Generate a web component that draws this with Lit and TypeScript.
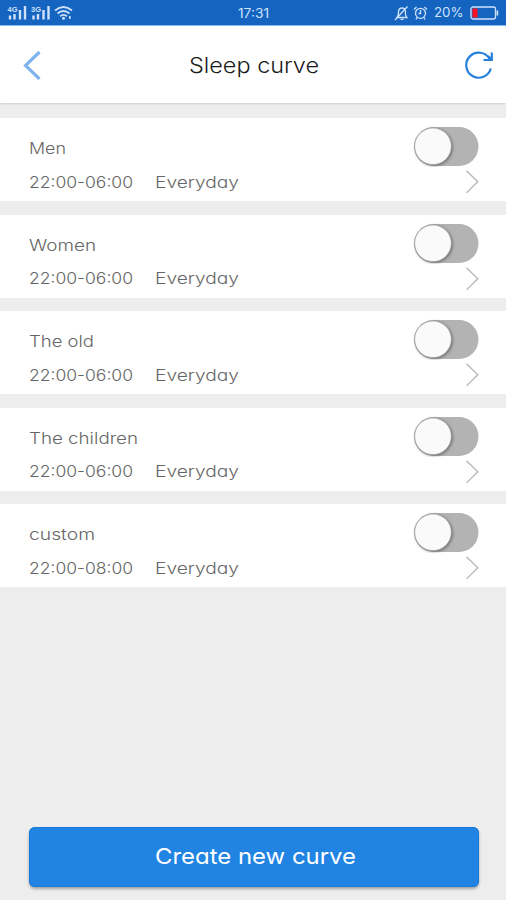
import { LitElement, html, css, svg } from "lit";
import { customElement, property } from "lit/decorators.js";

const curves = [
  { name: "Men", width: 37, hours: "22:00-06:00" },
  { name: "Women", width: 67, hours: "22:00-06:00" },
  { name: "The old", width: 65, hours: "22:00-06:00" },
  { name: "The children", width: 109, hours: "22:00-06:00" },
  { name: "custom", width: 66, hours: "22:00-08:00" },
];

// One line of wide lettering, stretched to a set width.
@customElement("wide-label")
export class WideLabel extends LitElement {
  @property() text = "";
  @property({ type: Number }) width = 100;
  @property({ type: Number }) size = 16;
  static styles = css`
    :host { display: block; line-height: 0; }
    svg { display: block; overflow: visible; }
    text {
      font-family: Inter, "Liberation Sans", sans-serif;
      font-weight: var(--label-weight, 300);
      font-feature-settings: "cv11";
      fill: currentColor;
    }
  `;
  render() {
    const h = Math.round(this.size * 1.2);
    return html`<svg width=${this.width} height=${h}>
      ${svg`<text x="0" y=${this.size * 0.95} font-size=${this.size} textLength=${this.width} lengthAdjust="spacingAndGlyphs">${this.text}</text>`}
    </svg>`;
  }
}

@customElement("curve-row")
export class CurveRow extends LitElement {
  @property() name = "";
  @property({ type: Number }) nameWidth = 60;
  @property() hours = "";
  static styles = css`
    :host {
      display: flex; justify-content: space-between; box-sizing: border-box;
      height: 83px; padding: 0 27.5px 0 28.5px; background: #fff; color: #666;
    }
    .info { padding-top: 21px; }
    .when { display: flex; gap: 22px; margin-top: 14.5px; }
    .side { display: flex; flex-direction: column; align-items: flex-end; padding-top: 8px; }
    .side svg { display: block; }
    .arrow { margin-top: 3px; }
    .knob { filter: drop-shadow(1px 1px 1.5px rgba(0, 0, 0, 0.4)); }
  `;
  render() {
    return html`
      <div class="info">
        <wide-label .text=${this.name} .width=${this.nameWidth} .size=${16}></wide-label>
        <div class="when">
          <wide-label .text=${this.hours} .width=${104} .size=${16}></wide-label>
          <wide-label .text=${"Everyday"} .width=${84} .size=${16}></wide-label>
        </div>
      </div>
      <div class="side">
        <svg width="66" height="41" viewBox="0 0 66 41">
          <rect x="1" y="1" width="64.5" height="39" rx="19.5" fill="#b3b3b3"/>
          <circle class="knob" cx="20" cy="20.3" r="18.3" fill="#fafafa" stroke="#999" stroke-width=".6"/>
        </svg>
        <svg class="arrow" width="14" height="24" viewBox="0 0 14 24" fill="none" stroke="#b5b5b5" stroke-width="1.3">
          <path d="M1.500 .7 12.800 11.800 1.500 22.900"/>
        </svg>
      </div>`;
  }
}

@customElement("app-root")
export class AppRoot extends LitElement {
  static styles = css`
    :host { display: flex; flex-direction: column; height: 900px; background: #ededed; overflow: hidden; }
    svg { display: block; }
    .status {
      display: grid; grid-template-columns: 1fr auto 1fr; flex: none; height: 26px; box-sizing: border-box;
      background: #1464c0; color: #cfe2fb; border-bottom: 1px solid #8ab8f5; padding: 1px 7px 0 7px; align-items: center;
      --label-weight: 400;
    }
    .right { display: flex; justify-content: flex-end; align-items: center; }
    .percent { margin: 0 7px 0 6px; }
    .header {
      display: grid; grid-template-columns: 1fr auto 1fr; align-items: center; flex: none; height: 76.5px;
      box-sizing: border-box; padding: 2px 12px 0 22px; background: #fff; color: #1c1c1c;
      box-shadow: 0 1px 2px rgba(0, 0, 0, 0.13);
    }
    .title { margin: 0 9px 0 0; }
    .refresh { justify-self: end; }
    .list { display: flex; flex-direction: column; gap: 13.6px; margin-top: 15.5px; }
    .create {
      display: flex; align-items: center; justify-content: center; height: 60px; margin: auto 27.5px 13.5px 28.5px;
      border: 0; padding: 0 0 1px 3px; box-sizing: border-box; border-radius: 6px; background: #2184e2; color: #fff; flex: none;
      box-shadow: 0 2px 3px rgba(0, 0, 0, 0.32), inset 0 0 0 1px #187bdc; --label-weight: 400;
    }
  `;

  signal(label: string, x: number) {
    return svg`<g transform="translate(${x} 0)">
      <text x="-.5" y="6.800" font-size="7.500" font-weight="700" font-family="Liberation Sans, sans-serif">${label}</text>
      <path d="M2 10.500v4M6.500 9v5.500M12 5v9.500M17 1v13.500" stroke="currentColor" stroke-width="2.400"/>
    </g>`;
  }

  render() {
    return html`
      <div class="status">
        <svg width="68" height="16" viewBox="0 0 68 16" fill="currentColor">
          ${this.signal("4G", 1)} ${this.signal("3G", 24.5)}
          <g fill="none" stroke="currentColor" stroke-width="1.7">
            <path d="M48 5.5Q56.500-1.500 65 5.500M50.500 8.500Q56.500 3.500 62.500 8.500M53 11.300Q56.500 8.500 60 11.300"/>
          </g>
          <circle cx="56.500" cy="13.200" r="1.500"/><path d="M62 11h1.600v3H62z"/>
        </svg>
        <wide-label .text=${"17:31"} .width=${31} .size=${12.8}></wide-label>
        <div class="right">
          <svg width="34" height="16" viewBox="0 0 34 16" fill="none" stroke="currentColor" stroke-width="1.3">
            <path d="M3 12.500Q4.500 11 4.500 6.500Q5 3 8 3Q11 3 11.500 6.500V10L13 12.500zM6.500 14.300h3M1 15 13.500 1.500"/>
            <circle cx="26.500" cy="8.300" r="5"/><path d="M26.500 5v3.500h-2M20 4.500 22.500 2M33 4.500 30.500 2M23 12.500 22 14.500M30 12.500 31 14.500"/>
          </svg>
          <wide-label class="percent" .text=${"20%"} .width=${29.5} .size=${13}></wide-label>
          <svg width="29" height="14" viewBox="0 0 29 14">
            <rect x="1" y="1" width="24.500" height="12" rx="2" fill="none" stroke="currentColor" stroke-width="1.300"/>
            <path d="M26.500 4.500h1.700v5h-1.700z" fill="currentColor"/>
            <path d="M2.500 2.500h5v9h-5z" fill="#ff1020"/>
          </svg>
        </div>
      </div>
      <div class="header">
        <svg width="20" height="30" viewBox="0 0 20 30" fill="none" stroke="#80b4ee" stroke-width="3.200">
          <path d="M17.500 2 3.500 15.500 17.500 29"/>
        </svg>
        <wide-label class="title" .text=${"Sleep curve"} .width=${130} .size=${21}></wide-label>
        <svg class="refresh" width="30" height="30" viewBox="0 0 30 30" fill="none" stroke="#2580dc" stroke-width="2.200">
          <path d="M26.800 18.500A12.500 12.500 0 1 1 25.500 8.800M27.800 2.500V10H19.500M24 6 27.500 9.500"/>
        </svg>
      </div>
      <div class="list">
        ${curves.map((c) => html`<curve-row .name=${c.name} .nameWidth=${c.width} .hours=${c.hours}></curve-row>`)}
      </div>
      <button class="create">
        <wide-label .text=${"Create new curve"} .width=${201} .size=${22}></wide-label>
      </button>`;
  }
}
